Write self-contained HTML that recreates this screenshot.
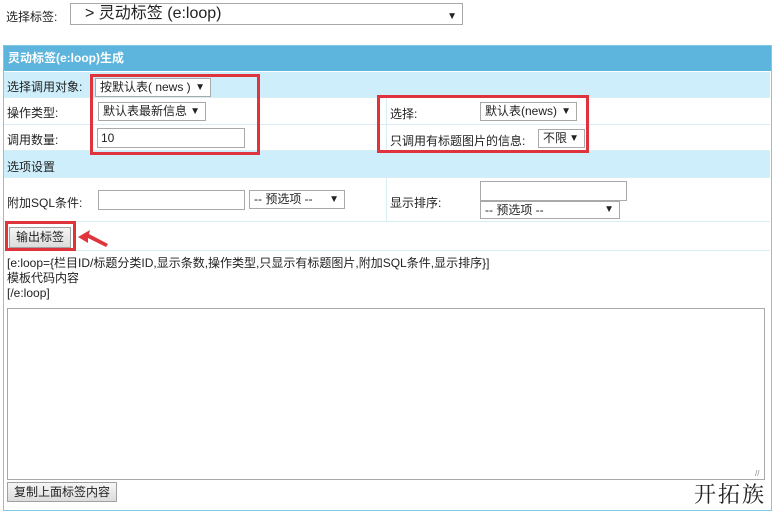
<!DOCTYPE html>
<html><head><meta charset="utf-8"><style>
*{box-sizing:border-box;margin:0;padding:0}
body{width:775px;height:514px;background:#fff;position:relative;overflow:hidden;font-family:"Liberation Sans","Noto Sans CJK SC",sans-serif;font-size:12px;color:#222}
.a{position:absolute}
.sel{position:absolute;border:1px solid #a9a9a9;background:#fff;height:19px;font-size:12px;line-height:17px;padding-left:4px;white-space:nowrap}
.sel i{position:absolute;right:5px;top:0;font-style:normal;font-size:10px}
.inp{position:absolute;border:1px solid #a9a9a9;background:#fff;height:20px;line-height:18px;padding-left:3px;font-size:12px}
.row{position:absolute;left:4px;width:766px;border-bottom:1px solid #d8eef5}
.lb{background:#cdeefa}
.red{position:absolute;border:3px solid #e0343c}
.btn{position:absolute;border:1px solid #a0a0a0;background:linear-gradient(#f6f6f6,#dcdcdc);font-size:12px;line-height:18px;padding:0 6px}
</style></head><body>
<div class="a" style="left:6px;top:8px;font-size:12px">选择标签:</div>
<div class="sel" style="left:70px;top:3px;width:393px;height:22px;font-size:16px;line-height:20px;padding-left:14px">&gt; 灵动标签 (e:loop)<i style="top:3px">▼</i></div>

<div class="a" style="left:3px;top:45px;width:769px;height:466px;border:1px solid #7fc8e4"></div>
<div class="a" style="left:4px;top:46px;width:767px;height:25px;background:#5db4dc;color:#fff;font-weight:bold;line-height:25px;padding-left:4px">灵动标签(e:loop)生成</div>

<div class="row lb" style="top:72px;height:26px"></div>
<div class="row" style="top:98px;height:27px"></div>
<div class="row" style="top:125px;height:26px"></div>
<div class="row lb" style="top:151px;height:27px"></div>
<div class="row" style="top:178px;height:44px"></div>
<div class="row" style="top:222px;height:29px"></div>
<div class="a" style="left:386px;top:98px;width:1px;height:53px;background:#d8eef5"></div>
<div class="a" style="left:386px;top:178px;width:1px;height:44px;background:#d8eef5"></div>

<div class="a" style="left:7px;top:78px">选择调用对象:</div>
<div class="sel" style="left:95px;top:78px;width:116px">按默认表( news )<i>▼</i></div>
<div class="a" style="left:7px;top:104px">操作类型:</div>
<div class="sel" style="left:98px;top:102px;width:108px">默认表最新信息<i>▼</i></div>
<div class="a" style="left:7px;top:131px">调用数量:</div>
<div class="inp" style="left:97px;top:128px;width:148px">10</div>
<div class="red" style="left:90px;top:74px;width:170px;height:81px"></div>

<div class="a" style="left:390px;top:105px">选择:</div>
<div class="sel" style="left:480px;top:102px;width:97px">默认表(news)<i>▼</i></div>
<div class="a" style="left:390px;top:132px">只调用有标题图片的信息:</div>
<div class="sel" style="left:538px;top:129px;width:47px">不限<i>▼</i></div>
<div class="red" style="left:377px;top:95px;width:212px;height:58px"></div>

<div class="a" style="left:7px;top:158px">选项设置</div>
<div class="a" style="left:7px;top:194px">附加SQL条件:</div>
<div class="inp" style="left:98px;top:190px;width:147px"></div>
<div class="sel" style="left:249px;top:190px;width:96px">-- 预选项 --<i>▼</i></div>
<div class="a" style="left:390px;top:194px">显示排序:</div>
<div class="inp" style="left:480px;top:181px;width:147px"></div>
<div class="sel" style="left:480px;top:201px;width:140px;height:18px;line-height:16px">-- 预选项 --<i>▼</i></div>

<div class="btn" style="left:9px;top:227px;height:21px;line-height:19px">输出标签</div>
<div class="red" style="left:5px;top:221px;width:71px;height:30px"></div>
<svg class="a" style="left:76px;top:226px" width="34" height="24"><polygon points="2,11 14,4 13,8 32,18 30,21 12,12 12,17" fill="#e0343c"/></svg>

<div class="a" style="left:7px;top:256px;line-height:15px;font-size:12px">[e:loop={栏目ID/标题分类ID,显示条数,操作类型,只显示有标题图片,附加SQL条件,显示排序}]<br>模板代码内容<br>[/e:loop]</div>
<div class="a" style="left:7px;top:308px;width:758px;height:172px;border:1px solid #a9a9a9;background:#fff"></div>
<div class="a" style="left:755px;top:469px;font-size:8px;color:#888">//</div>
<div class="btn" style="left:7px;top:482px;height:20px;line-height:18px">复制上面标签内容</div>
<div class="a" style="left:694px;top:478px;font-size:22px;font-family:'Noto Serif CJK SC',serif;color:#222;letter-spacing:2px">开拓族</div>
</body></html>
